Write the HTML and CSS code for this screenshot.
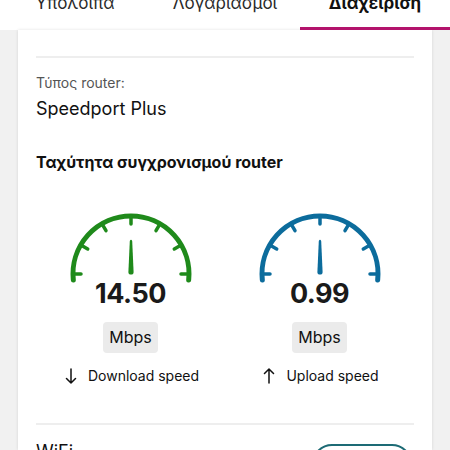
FILE: index.html
```html
<!DOCTYPE html>
<html lang="el">
<head>
  <meta charset="UTF-8" />
  <meta name="viewport" content="width=device-width, initial-scale=1.0" />
  <title>Διαχείριση router</title>
  <link rel="stylesheet" href="styles.css">
</head>
<body>
  <nav class="tabs">
    <div class="tab">Υπόλοιπα</div>
    <div class="tab">Λογαριασμοί</div>
    <div class="tab active">Διαχείριση</div>
  </nav>

  <main class="card">
    <hr class="divider" />

    <div class="router-type">
      <div class="label">Τύπος router:</div>
      <div class="value">Speedport Plus</div>
    </div>

    <h2 class="section-title">Ταχύτητα συγχρονισμού router</h2>

    <div class="speeds">
      <!-- download -->
      <div class="speed">
        <svg class="gauge gauge-down" width="130" height="74" viewBox="0 0 130 74">
          <path class="arc" d="M7.32 70.06 A58 58 0 1 1 122.68 70.06" />
          <path class="tick" d="M7 64 L15 64 M14.8 35 L21.7 39 M36 13.8 L40 20.7 M65 6 L65 14 M94 13.8 L90 20.7 M115.2 35 L108.3 39 M123 64 L115 64" />
          <path class="needle" d="M63.8 31 Q65 28.5 66.2 31 L67.6 62 A2.6 2.6 0 0 1 62.4 62 Z" />
        </svg>
        <div class="value-num">14.50</div>
        <div class="unit">Mbps</div>
        <div class="speed-label">
          <svg width="12" height="16" viewBox="0 0 12 16"><path d="M6 1 V15 M1.5 10.5 L6 15 L10.5 10.5" /></svg>
          Download speed
        </div>
      </div>

      <!-- upload -->
      <div class="speed">
        <svg class="gauge gauge-up" width="130" height="74" viewBox="0 0 130 74">
          <path class="arc" d="M7.32 70.06 A58 58 0 1 1 122.68 70.06" />
          <path class="tick" d="M7 64 L15 64 M14.8 35 L21.7 39 M36 13.8 L40 20.7 M65 6 L65 14 M94 13.8 L90 20.7 M115.2 35 L108.3 39 M123 64 L115 64" />
          <path class="needle" d="M63.8 31 Q65 28.5 66.2 31 L67.6 62 A2.6 2.6 0 0 1 62.4 62 Z" />
        </svg>
        <div class="value-num">0.99</div>
        <div class="unit">Mbps</div>
        <div class="speed-label">
          <svg width="12" height="16" viewBox="0 0 12 16"><path d="M6 15 V1 M1.5 5.5 L6 1 L10.5 5.5" /></svg>
          Upload speed
        </div>
      </div>
    </div>

    <hr class="divider" />

    <div class="wifi-row">
      <div class="wifi-title">WiFi</div>
      <button class="outline-btn">&nbsp;</button>
    </div>
  </main>
</body>
</html>
```

FILE: styles.css
```css
body {
  margin: 0;
  background-color: #f1f1f1;
  font-family: "Inter", "Noto Sans", sans-serif;
  color: #111;
  height: 450px;
  overflow: hidden;
}
.tabs {
  display: flex;
  background: white;
  height: 30px;
  overflow: hidden;
}
.tab {
  flex: 1;
  text-align: center;
  font-size: 17px;
  line-height: 20px;
  margin-top: -7px;
  color: #2a2a2a;
  border-bottom: 3px solid transparent;
  height: 37px;
  box-sizing: border-box;
}
.tab.active {
  font-weight: 700;
  color: #111;
  border-bottom-color: #b3136c;
}
.card {
  background: white;
  margin: 0 18px;
  padding: 26px 18px 0;
  box-shadow: 0 0 3px rgba(0,0,0,0.12);
  height: 420px;
  box-sizing: border-box;
}
.divider {
  border: none;
  height: 2px;
  background: #eeeeee;
  margin: 0;
}
.router-type {
  margin-top: 15px;
}
.label {
  font-size: 14px;
  line-height: 20px;
  color: #555;
}
.value {
  font-size: 18px;
  line-height: 26px;
  margin-top: 3px;
}
.section-title {
  font-size: 16px;
  font-weight: 700;
  line-height: 22px;
  margin: 29px 0 0;
}
.speeds {
  display: grid;
  grid-template-columns: 1fr 1fr;
  margin-top: 37px;
}
.speed {
  display: flex;
  flex-direction: column;
  align-items: center;
}
.gauge .arc {
  fill: none;
  stroke-width: 5;
  stroke-linecap: round;
}
.gauge .tick {
  stroke-width: 3.5;
  stroke-linecap: round;
}
.gauge-down .arc, .gauge-down .tick { stroke: #1f8a1b; }
.gauge-down .needle { fill: #1f8a1b; }
.gauge-up .arc, .gauge-up .tick { stroke: #0c6c9c; }
.gauge-up .needle { fill: #0c6c9c; }
.value-num {
  font-size: 27px;
  font-weight: 700;
  line-height: 32px;
  letter-spacing: -0.5px;
  margin-top: -6px;
  color: #1a1a1a;
}
.unit {
  margin-top: 12px;
  background: #ebebeb;
  border-radius: 4px;
  padding: 0 6px;
  height: 31px;
  line-height: 31px;
  font-size: 16px;
}
.speed-label {
  display: flex;
  align-items: center;
  gap: 11px;
  margin-top: 13px;
  font-size: 14px;
  line-height: 20px;
  margin-left: 3px;
}
.speed-label svg {
  fill: none;
  stroke: #111;
  stroke-width: 1.5;
  stroke-linecap: round;
  stroke-linejoin: round;
}
.speeds + .divider {
  margin-top: 37px;
}
.wifi-row {
  display: flex;
  justify-content: space-between;
  align-items: flex-start;
  margin-top: 19px;
}
.wifi-title {
  font-size: 18px;
  line-height: 24px;
  margin-top: -4px;
}
.outline-btn {
  width: 100px;
  height: 40px;
  border: 2px solid #1d6b75;
  border-radius: 20px;
  background: white;
  margin-right: 2px;
}
```
